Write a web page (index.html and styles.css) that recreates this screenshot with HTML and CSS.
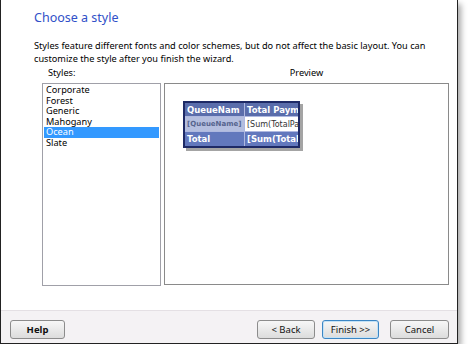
FILE: index.html
```html
<!DOCTYPE html>
<html lang="en">
<head>
    <meta charset="UTF-8">
    <link rel="stylesheet" href="styles.css">
    <title>Choose a style</title>
</head>
<body>
    <div class="dialog">
        <div class="content">
            <h1 class="title">Choose a style</h1>
            <p class="intro">Styles feature different fonts and color schemes, but do not affect the basic layout. You can<br>customize the style after you finish the wizard.</p>

            <div class="panes">
                <div class="pane-list">
                    <div class="caption">Styles:</div>
                    <ul class="style-list">
                        <li>Corporate</li>
                        <li>Forest</li>
                        <li>Generic</li>
                        <li>Mahogany</li>
                        <li class="selected">Ocean</li>
                        <li>Slate</li>
                    </ul>
                </div>
                <div class="pane-preview">
                    <div class="caption center">Preview</div>
                    <div class="preview-box">
                        <table class="sample">
                            <tr class="head">
                                <td>QueueNam</td>
                                <td>Total Paym</td>
                            </tr>
                            <tr class="detail">
                                <td class="group">[QueueName]</td>
                                <td class="value">[Sum(TotalPaym</td>
                            </tr>
                            <tr class="total">
                                <td>Total</td>
                                <td>[Sum(TotalPaym</td>
                            </tr>
                        </table>
                    </div>
                </div>
            </div>
        </div>

        <div class="footer">
            <button type="button" class="btn help">Help</button>
            <div class="spacer"></div>
            <button type="button" class="btn back">&lt; Back</button>
            <button type="button" class="btn finish">Finish &gt;&gt;</button>
            <button type="button" class="btn cancel">Cancel</button>
        </div>
    </div>
</body>
</html>
```

FILE: styles.css
```css
body {
    margin: 0;
    background: #fff;
    font-family: "Noto Sans", "Open Sans", sans-serif;
    font-size: 9.2px;
    color: #000;
}

.dialog {
    width: 456px;
    height: 343px;
    border-left: 1px solid #222;
    border-right: 1px solid #222;
    border-bottom: 1px solid #222;
    box-shadow: 3px 4px 6px rgba(0, 0, 0, 0.35);
    display: flex;
    flex-direction: column;
    background: #fff;
}

.content {
    flex: 1;
    padding: 8px 8px 0 33px;
}

.title {
    margin: 0;
    font-size: 12.5px;
    font-weight: normal;
    color: #3050c8;
    line-height: 20px;
}

.intro {
    margin: 11px 0 0;
    line-height: 13px;
    white-space: nowrap;
}

.panes {
    display: flex;
    gap: 3px;
    margin-left: 8px;
}

.caption {
    height: 12px;
    line-height: 12px;
    margin: 2px 0 4px;
    padding-left: 6px;
}

.caption.center {
    text-align: center;
    padding-left: 0;
}

.pane-list {
    width: 119px;
}

.style-list {
    list-style: none;
    margin: 0;
    padding: 1px 1px 0 1px;
    height: 200px;
    border: 1px solid #a0a0a8;
    line-height: 10.5px;
}

.style-list li {
    height: 10.5px;
    padding-left: 2px;
}

.style-list li.selected {
    background: #3399ff;
    color: #fff;
}

.pane-preview {
    width: 285px;
}

.preview-box {
    height: 183px;
    border: 1px solid #8a8a8a;
    padding: 17px 0 0 18px;
}

.sample {
    border-collapse: collapse;
    border: 2px solid #1e2a66;
    box-shadow: 3px 3px 0 #a4a4a4;
    font-family: "DejaVu Sans", Verdana, sans-serif;
    font-size: 8.5px;
    font-weight: bold;
    table-layout: fixed;
    width: 117px;
}

.sample td {
    height: 14px;
    padding: 0 1px 0 2px;
    white-space: nowrap;
    overflow: hidden;
    border: 1px solid #aeb8e0;
}

.sample td:first-child {
    width: 56px;
}

.head td {
    height: 13px;
    background: #5a6dab;
    color: #fff;
}

.detail .group {
    font-size: 7px;
    background: #b4bedf;
    color: #56648e;
}

.detail .value {
    font-size: 8px;
    background: #fff;
    color: #333;
    font-weight: normal;
}

.total td {
    background: #6278bd;
    color: #fff;
}

.footer {
    height: 33px;
    box-sizing: border-box;
    border-top: 1px solid #e4e0e4;
    background: #f4f2f4;
    display: flex;
    align-items: flex-start;
    padding: 9px 8px 0 9px;
}

.spacer {
    flex: 1;
}

.btn {
    height: 19px;
    padding: 0;
    border: 1px solid #8c8c8c;
    border-radius: 3px;
    background: linear-gradient(#f7f7f7, #dcdcdc);
    font-family: "Noto Sans", "Open Sans", sans-serif;
    font-size: 9.5px;
    color: #111;
    line-height: 16px;
}

.btn.help {
    width: 55px;
    font-weight: bold;
}

.btn.back {
    width: 58px;
}

.btn.finish {
    width: 57px;
    margin-left: 7px;
    border-color: #3c86c4;
    box-shadow: inset 0 0 0 1px #c4e2f6;
}

.btn.cancel {
    width: 59px;
    margin-left: 11px;
}
```
